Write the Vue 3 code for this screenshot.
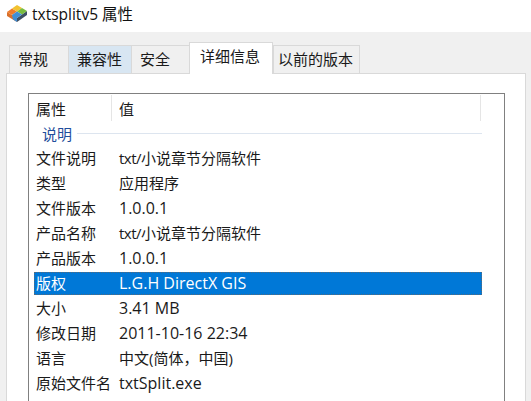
<script setup>
const tabs = [
  { label: '常规', cls: 'w1' },
  { label: '兼容性', cls: 'w2 hover' },
  { label: '安全', cls: 'w3' },
  { label: '详细信息', cls: 'w4 active' },
  { label: '以前的版本', cls: 'w5' },
]
const rows = [
  { k: '文件说明', v: '小说章节分隔软件', pre: 'txt/' },
  { k: '类型', v: '应用程序' },
  { k: '文件版本', v: '1.0.0.1', lat: true },
  { k: '产品名称', v: '小说章节分隔软件', pre: 'txt/' },
  { k: '产品版本', v: '1.0.0.1', lat: true },
  { k: '版权', v: 'L.G.H DirectX GIS', lat: true, sel: true },
  { k: '大小', v: '3.41 MB', lat: true },
  { k: '修改日期', v: '2011-10-16 22:34', lat: true },
  { k: '语言', v: '中文(简体，中国)' },
  { k: '原始文件名', v: 'txtSplit.exe', lat: true },
]
</script>

<template>
  <div class="win">
    <div class="title">
      <svg class="icon" width="22" height="18" viewBox="0 0 22 18">
        <path d="M1 8 L11 14 L11 18 L1 12 Z" fill="#d9702a" />
        <path d="M21 7 L11 14 L11 18 L21 11 Z" fill="#3d4f63" />
        <path d="M1 8 L6 4.5 L11 7.5 L6 11 Z" fill="#ee7b2c" />
        <path d="M6 4.5 L11 1 L16 4 L11 7.5 Z" fill="#f2c230" />
        <path d="M11 7.5 L16 4 L21 7 L16 10.5 Z" fill="#79bd3e" />
        <path d="M6 11 L11 7.5 L16 10.5 L11 14 L11 18 L7 15.5 Z" fill="#3f8fd6" />
      </svg>
      <span class="title-text">txtsplitv5 属性</span>
    </div>
    <div class="body">
      <div class="tabs">
        <div v-for="t in tabs" :key="t.label" class="tab" :class="t.cls">{{ t.label }}</div>
      </div>
      <div class="panel">
        <div class="list">
          <div class="head">
            <div class="hcell c1">属性</div>
            <div class="hcell c2">值</div>
          </div>
          <div class="group">
            <span class="group-name">说明</span>
            <span class="group-line"></span>
          </div>
          <div v-for="r in rows" :key="r.k" class="row" :class="{ sel: r.sel }">
            <div class="c1 cell">{{ r.k }}</div>
            <div class="cell" :class="{ lat: r.lat }"><span v-if="r.pre" class="pre">{{ r.pre }}</span>{{ r.v }}</div>
          </div>
        </div>
      </div>
    </div>
  </div>
</template>

<style>
html, body { margin: 0; padding: 0; overflow: hidden; background: #f0f0f0; }
</style>

<style scoped>
.win {
  width: 531px;
  height: 401px;
  overflow: hidden;
  font-family: "Open Sans", "Noto Sans CJK SC", sans-serif;
  font-size: 15px;
  color: #1a1a1a;
  background: #f0f0f0;
}
.title {
  height: 32px;
  background: #fff;
  display: flex;
  align-items: center;
  padding-left: 6px;
  gap: 4px;
}
.icon { margin-top: -6px; }
.title-text { font-size: 15.5px; color: #111; margin-top: -6px; }
.body { padding: 10px 0 0 6px; }
.tabs {
  display: flex;
  align-items: flex-end;
  height: 31px;
  padding-left: 3px;
  position: relative;
  z-index: 1;
}
.tab {
  box-sizing: border-box;
  height: 28px;
  border: 1px solid #d9d9d9;
  border-bottom: none;
  border-right: none;
  background: #f0f0f0;
  padding-left: 8px;
  line-height: 27px;
  white-space: nowrap;
}
.w1 { width: 59px; }
.w2 { width: 63px; }
.w3 { width: 58px; }
.w4 { width: 84px; padding-left: 10px; }
.w5 { width: 87px; padding-left: 4px; border-right: 1px solid #d9d9d9; }
.hover { background: #d8e6f2; }
.active {
  background: #fff;
  border-right: 1px solid #d9d9d9;
  line-height: 26px;
  margin-bottom: -1px;
  padding-bottom: 3px;
  height: 32px;
}
.panel {
  box-sizing: border-box;
  width: 520px;
  height: 340px;
  background: #fff;
  border: 1px solid #d9d9d9;
  padding: 19px 0 0 21px;
}
.list {
  box-sizing: border-box;
  width: 477px;
  height: 330px;
  border: 1px solid #808080;
  border-bottom: none;
  padding: 1px 0 0 5px;
}
.head { display: flex; height: 26px; }
.hcell {
  box-sizing: border-box;
  height: 26px;
  line-height: 29px;
  padding-left: 2px;
}
.head .c1 { width: 78px; border-right: 1px solid #e5e5e5; }
.head .c2 { width: 369px; padding-left: 7px; border-right: 1px solid #e5e5e5; }
.group {
  display: flex;
  align-items: center;
  height: 26px;
  gap: 5px;
  padding-left: 8px;
  color: #1f4e9c;
}
.group-name { margin-top: -1px; }
.group-line { flex: 1; height: 1px; background: #dde5ef; margin-right: 22px; margin-top: -2px; }
.row {
  box-sizing: border-box;
  display: flex;
  width: 448px;
  height: 25px;
  line-height: 23px;
  padding-left: 2px;
}
.c1.cell { width: 83px; flex: none; }
.lat { font-size: 16px; }
.pre { letter-spacing: -0.5px; }
.sel {
  background: #0078d7;
  color: #fff;
  outline: 1px dotted #5a6a78;
  outline-offset: -1px;
  height: 23px;
  margin-bottom: 2px;
}
</style>
